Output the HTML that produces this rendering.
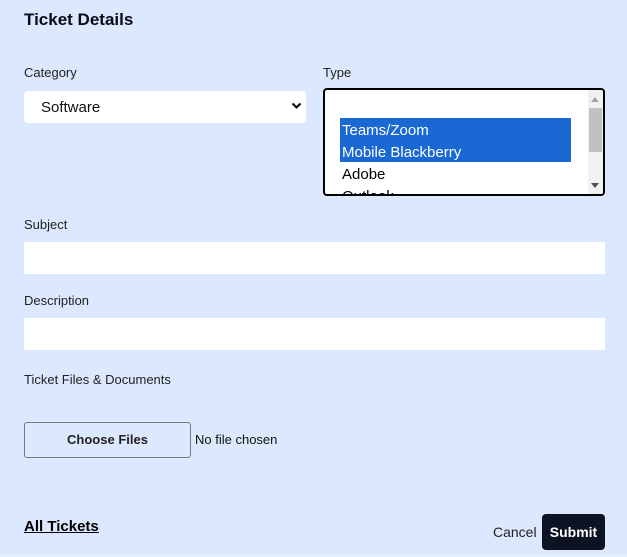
<!DOCTYPE html>
<html><head><style>
body{margin:0;width:627px;height:557px;background:#dbe8fe;font-family:"Liberation Sans",Arial,sans-serif;position:relative;overflow:hidden;color:#111}
.a{position:absolute}
.lbl{font-size:13px;color:#222}
.inp{background:#fff;}
</style></head><body>
<div class="a" style="left:24px;top:10px;font-size:17px;font-weight:bold;color:#0b0b18">Ticket Details</div>
<div class="a lbl" style="left:24px;top:65px">Category</div>
<div class="a lbl" style="left:323px;top:65px">Type</div>
<div class="a inp" style="left:24px;top:91px;width:282px;height:32px;border-radius:4px"></div>
<div class="a" style="left:41px;top:99px;font-size:15px">Software</div>
<svg class="a" style="left:291px;top:101px" width="11" height="9" viewBox="0 0 11 9"><path d="M1.5 2.5 L5.5 6.5 L9.5 2.5" stroke="#000" stroke-width="2" fill="none"/></svg>
<div class="a" style="left:323px;top:88px;width:278px;height:104px;border:2px solid #000;border-radius:4px;background:#fff;overflow:hidden">
 <div class="a" style="left:15px;top:28px;width:231px;height:44px;background:#1a68d4"></div>
 <div class="a" style="left:17px;top:30px;font-size:15px;line-height:22px;color:#fff">Teams/Zoom<br>Mobile Blackberry</div>
 <div class="a" style="left:17px;top:74px;font-size:15px;line-height:22px;color:#000">Adobe<br>Outlook</div>
 <div class="a" style="left:263px;top:0;width:15px;height:104px;background:#f1f1f1"></div>
 <div class="a" style="left:264px;top:18px;width:13px;height:44px;background:#c1c1c1"></div>
 <div class="a" style="left:266px;top:7px;width:0;height:0;border-left:4px solid transparent;border-right:4px solid transparent;border-bottom:5px solid #a3a3a3"></div>
 <div class="a" style="left:266px;top:93px;width:0;height:0;border-left:4px solid transparent;border-right:4px solid transparent;border-top:5px solid #505050"></div>
</div>
<div class="a lbl" style="left:24px;top:217px">Subject</div>
<div class="a inp" style="left:24px;top:242px;width:581px;height:32px"></div>
<div class="a lbl" style="left:24px;top:293px">Description</div>
<div class="a inp" style="left:24px;top:318px;width:581px;height:32px"></div>
<div class="a lbl" style="left:24px;top:372px">Ticket Files &amp; Documents</div>
<div class="a" style="left:24px;top:422px;width:165px;height:34px;border:1px solid #777;border-radius:3px;text-align:center;line-height:34px;font-size:13px;font-weight:bold;color:#222">Choose Files</div>
<div class="a" style="left:195px;top:432px;font-size:13px">No file chosen</div>
<div class="a" style="left:24px;top:518px;font-size:15px;font-weight:bold;text-decoration:underline;color:#000">All Tickets</div>
<div class="a" style="left:493px;top:524px;font-size:14px;color:#222">Cancel</div>
<div class="a" style="left:542px;top:514px;width:63px;height:36px;background:#0e1324;border-radius:4px;color:#fff;font-weight:bold;font-size:14px;text-align:center;line-height:36px">Submit</div>
<div class="a" style="left:0;top:554px;width:627px;height:3px;background:#e3edfd"></div>
</body></html>
